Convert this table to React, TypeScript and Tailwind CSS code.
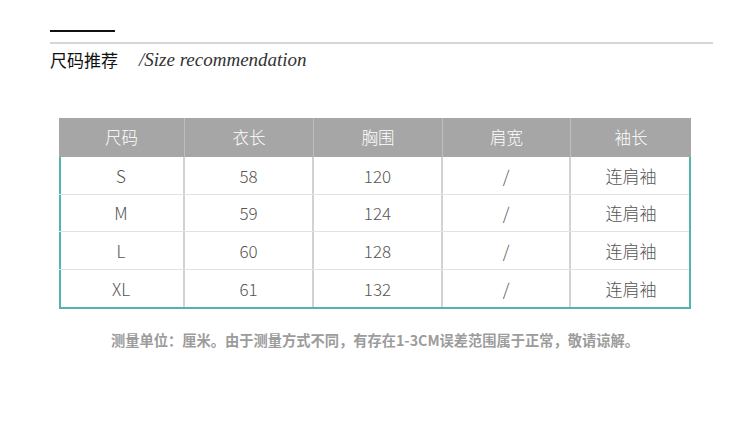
const cols = ["尺码", "衣长", "胸围", "肩宽", "袖长"];

const rows = [
  ["S", "58", "120", "/", "连肩袖"],
  ["M", "59", "124", "/", "连肩袖"],
  ["L", "60", "128", "/", "连肩袖"],
  ["XL", "61", "132", "/", "连肩袖"],
];

const grid = "grid grid-cols-[126px_129px_129px_128px_120px]";
const cjk = "font-['Noto_Sans_CJK_SC',sans-serif]";

export default function App() {
  return (
    <div className="h-[437px] w-[750px] bg-white">
      <div className="px-[50px] pt-[30px]">
        <div className="h-[2px] w-[65px] bg-[#111]" />
        <div className="mt-[10px] h-[2px] w-[663px] bg-[#d6d6d6]" />
        <div className="mt-[4px] flex items-center">
          <span className={`${cjk} text-[17px] leading-[24px] text-[#111]`}>尺码推荐</span>
          <span className="ml-[21px] font-['Liberation_Serif',serif] text-[19px] italic leading-[24px] text-[#333]">
            /Size recommendation
          </span>
        </div>
      </div>

      <div className={`ml-[59px] mt-[46px] w-[632px] ${cjk} font-light`}>
        <div className={`${grid} h-[39px] bg-[#a6a6a6] text-white`}>
          {cols.map((c, i) => (
            <div
              key={c}
              className={`flex items-center justify-center text-[16.5px] ${i < 4 ? "border-r border-[#bdbdbd]" : ""}`}
            >
              {c}
            </div>
          ))}
        </div>
        <div className="border-x-2 border-b-2 border-[#52b4ae]">
          {rows.map((r, ri) => (
            <div
              key={r[0]}
              className={`${grid} -ml-[2px] h-[37.5px] ${ri < 3 ? "border-b border-[#e2e2e2]" : ""}`}
            >
              {r.map((v, i) => (
                <div
                  key={i}
                  className={`flex items-center justify-center text-[17px] text-[#555] ${i < 4 ? "border-r-2 border-[#d2d2d2]" : ""}`}
                >
                  {v}
                </div>
              ))}
            </div>
          ))}
        </div>
      </div>

      <p className={`mt-[20px] text-center ${cjk} text-[14.25px] font-semibold text-[#9c9c9c]`}>
        测量单位：厘米。由于测量方式不同，有存在1-3CM误差范围属于正常，敬请谅解。
      </p>
    </div>
  );
}
